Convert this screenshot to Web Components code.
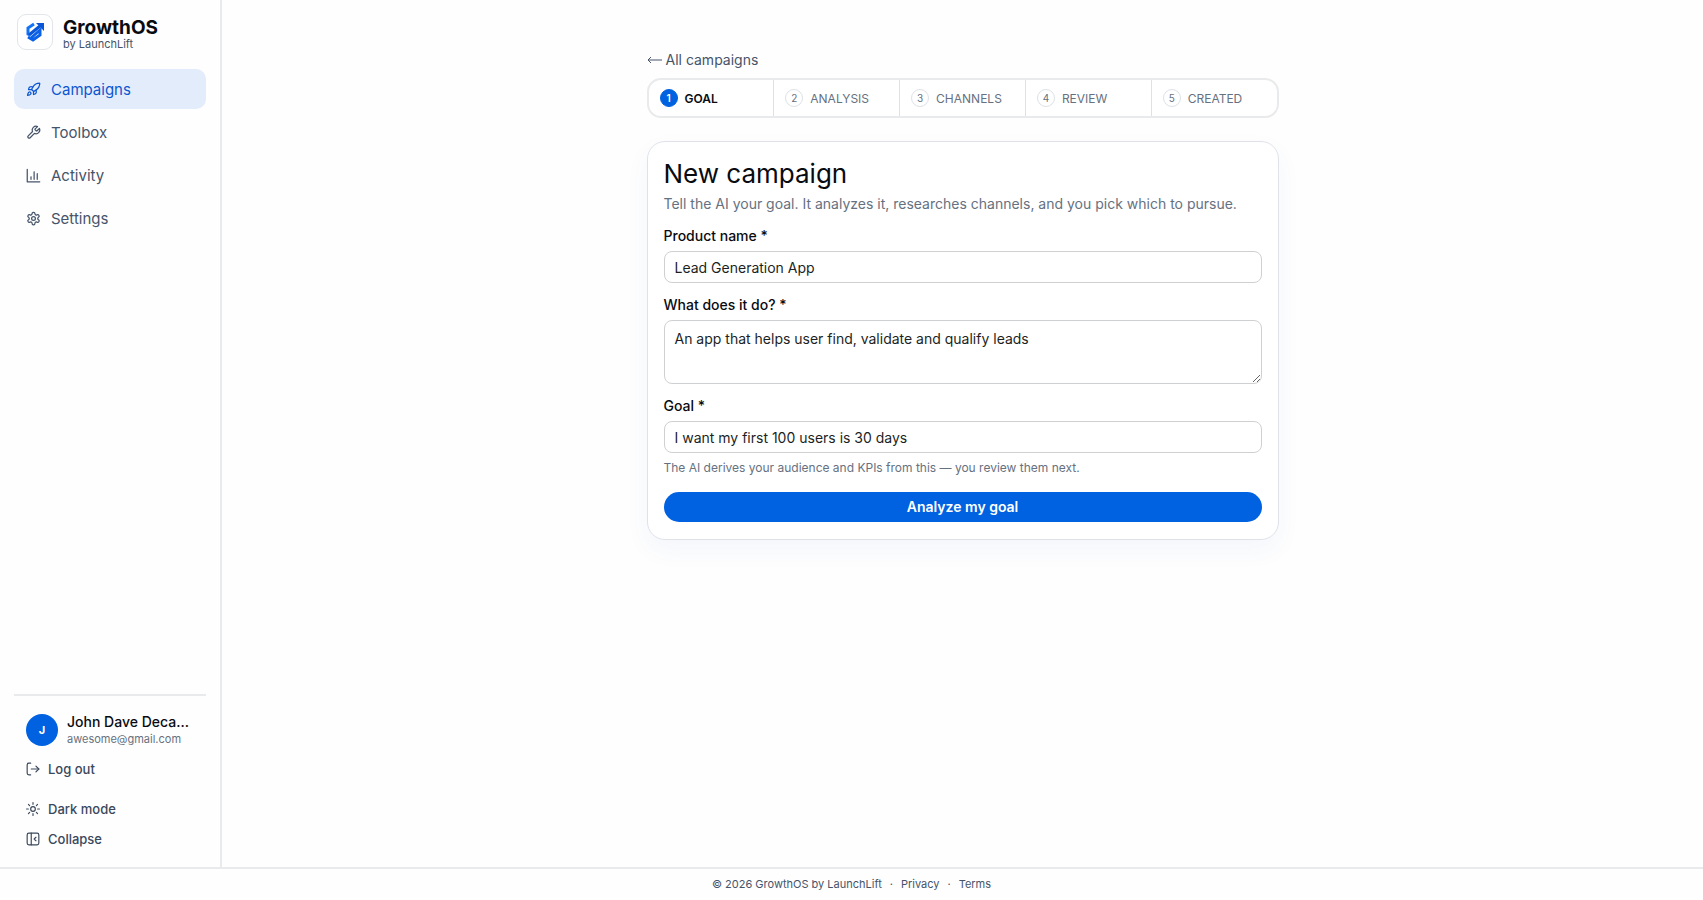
<!DOCTYPE html>
<html lang="en">
<head>
<meta charset="utf-8">
<meta name="viewport" content="width=device-width, initial-scale=1">
<title>New campaign - GrowthOS</title>
<style>
    :root {
        --blue: #0062e0;
        --ink: #090b10;
        --slate: #46546a;
        --muted: #66717f;
        --line: #e9eaec;
        --field: #cfd0d2;
    }

    body {
        margin: 0;
        font-family: Inter, "Noto Sans", sans-serif;
        font-size: 14px;
        color: var(--ink);
        background: #fefefe;
    }
</style>
</head>
<body>
<app-shell>
    <side-bar slot="sidebar">
        <brand-logo slot="brand"></brand-logo>
        <nav-item icon="rocket" href="#campaigns" active>Campaigns</nav-item>
        <nav-item icon="wrench" href="#toolbox">Toolbox</nav-item>
        <nav-item icon="chart" href="#activity">Activity</nav-item>
        <nav-item icon="gear" href="#settings">Settings</nav-item>
        <user-card slot="account" initial="J" email="awesome@gmail.com">John Dave Decastro</user-card>
        <side-action slot="account" icon="logout">Log out</side-action>
        <side-action slot="tools" icon="sun">Dark mode</side-action>
        <side-action slot="tools" icon="panel">Collapse</side-action>
    </side-bar>
    <back-link href="#campaigns">All campaigns</back-link>
    <step-list>
        <step-item number="1" active>Goal</step-item>
        <step-item number="2">Analysis</step-item>
        <step-item number="3">Channels</step-item>
        <step-item number="4">Review</step-item>
        <step-item number="5">Created</step-item>
    </step-list>
    <campaign-form></campaign-form>
    <page-footer slot="footer"></page-footer>
</app-shell>

<script>
const ICONS = {
    rocket: '<path d="M4.5 16.5c-1.5 1.26-2 5-2 5s3.74-.5 5-2c.71-.84.7-2.13-.09-2.91a2.18 2.18 0 0 0-2.91-.09z"/><path d="m12 15-3-3a22 22 0 0 1 2-3.95A12.88 12.88 0 0 1 22 2c0 2.72-.78 7.5-6 11a22.35 22.35 0 0 1-4 2z"/><path d="M9 12H4s.55-3.03 2-4c1.62-1.08 5 0 5 0"/><path d="M12 15v5s3.03-.55 4-2c1.08-1.62 0-5 0-5"/>',
    wrench: '<path d="M14.7 6.3a1 1 0 0 0 0 1.4l1.6 1.6a1 1 0 0 0 1.4 0l3.77-3.77a6 6 0 0 1-7.94 7.94l-6.91 6.91a2.12 2.12 0 0 1-3-3l6.91-6.91a6 6 0 0 1 7.94-7.94l-3.76 3.76z"/>',
    chart: '<path d="M2 2v20h20"/><path d="M8 18v-4"/><path d="M13 18V6"/><path d="M18 18V9"/>',
    gear: '<path d="M12.22 2h-.44a2 2 0 0 0-2 2v.18a2 2 0 0 1-1 1.73l-.43.25a2 2 0 0 1-2 0l-.15-.08a2 2 0 0 0-2.73.73l-.22.38a2 2 0 0 0 .73 2.73l.15.1a2 2 0 0 1 1 1.72v.51a2 2 0 0 1-1 1.74l-.15.09a2 2 0 0 0-.73 2.73l.22.38a2 2 0 0 0 2.73.73l.15-.08a2 2 0 0 1 2 0l.43.25a2 2 0 0 1 1 1.73V20a2 2 0 0 0 2 2h.44a2 2 0 0 0 2-2v-.18a2 2 0 0 1 1-1.73l.43-.25a2 2 0 0 1 2 0l.15.08a2 2 0 0 0 2.73-.73l.22-.39a2 2 0 0 0-.73-2.73l-.15-.08a2 2 0 0 1-1-1.74v-.5a2 2 0 0 1 1-1.74l.15-.09a2 2 0 0 0 .73-2.73l-.22-.38a2 2 0 0 0-2.73-.73l-.15.08a2 2 0 0 1-2 0l-.43-.25a2 2 0 0 1-1-1.73V4a2 2 0 0 0-2-2z"/><circle cx="12" cy="12" r="3"/>',
    logout: '<path d="M8 2H5a3 3 0 0 0-3 3v14a3 3 0 0 0 3 3h3"/><path d="M9 12h13"/><path d="m17 7 5 5-5 5"/>',
    sun: '<circle cx="12" cy="12" r="4"/><path d="M12 1v3M12 20v3M4.2 4.2l2 2M17.8 17.8l2 2M1 12h3M20 12h3M6.2 17.8l-2 2M19.8 4.2l-2 2"/>',
    panel: '<rect x="2" y="2" width="20" height="20" rx="3"/><path d="M9 2v20"/><path d="m17 9-3 3 3 3"/>'
};

function icon(name, size) {
    return `<svg width="${size}" height="${size}" viewBox="0 0 24 24" fill="none" stroke="currentColor" stroke-width="2" stroke-linecap="round" stroke-linejoin="round" aria-hidden="true">${ICONS[name]}</svg>`;
}

class AppShell extends HTMLElement {
    constructor() {
        super();
        this.attachShadow({ mode: 'open' }).innerHTML = `
            <style>
            :host {
                display: flex;
                flex-direction: column;
                min-height: 100vh;
            }

            .body {
                display: flex;
                flex: 1;
            }

            main {
                flex: 1;
                display: flex;
                justify-content: center;
                padding: 48px 24px;
            }

            .column {
                flex: 1;
                max-width: 632px;
            }
            </style>
            <div class="body">
                <slot name="sidebar"></slot>
                <main><div class="column"><slot></slot></div></main>
            </div>
            <slot name="footer"></slot>
        `;
    }
}

class SideBar extends HTMLElement {
    constructor() {
        super();
        this.attachShadow({ mode: 'open' }).innerHTML = `
            <style>
            :host {
                display: flex;
                flex-direction: column;
                box-sizing: border-box;
                width: 222px;
                padding: 14px 14px 13px;
                border-right: 2px solid var(--line);
            }

            nav {
                display: flex;
                flex-direction: column;
                gap: 3px;
                margin-top: 19px;
                flex: 1;
            }

            .account {
                border-top: 2px solid var(--line);
                padding: 17px 12px 0;
            }

            .tools {
                padding: 10px 12px 0;
            }
            </style>
            <slot name="brand"></slot>
            <nav aria-label="Main"><slot></slot></nav>
            <div class="account"><slot name="account"></slot></div>
            <div class="tools"><slot name="tools"></slot></div>
        `;
    }
}

class BrandLogo extends HTMLElement {
    constructor() {
        super();
        this.attachShadow({ mode: 'open' }).innerHTML = `
            <style>
            :host {
                display: flex;
                align-items: center;
                gap: 10px;
                padding-left: 3px;
            }

            .mark {
                display: flex;
                align-items: center;
                justify-content: center;
                box-sizing: border-box;
                width: 36px;
                height: 36px;
                border: 1px solid #e2e5ea;
                border-radius: 9px;
                background: #fff;
            }

            .text {
                padding-top: 3px;
            }

            .name {
                font-size: 19px;
                font-weight: 700;
                line-height: 20px;
            }

            .by {
                font-size: 11px;
                line-height: 12px;
                color: var(--slate);
            }
            </style>
            <div class="mark">
                <svg width="20" height="22" viewBox="0 0 20 22" fill="none" stroke-width="3" aria-hidden="true">
                    <path stroke="#1273f5" d="M9 3 3 7v6l2 1"/>
                    <path stroke="#0a56d8" d="M4 14 15 5"/>
                    <path fill="#0a56d8" d="M11 2h8v8z"/>
                    <path stroke="#0b62e6" d="M3 16l5 3 7-5V9L6 17"/>
                </svg>
            </div>
            <div class="text">
                <div class="name">GrowthOS</div>
                <div class="by">by LaunchLift</div>
            </div>
        `;
    }
}

class NavItem extends HTMLElement {
    constructor() {
        super();
        this.attachShadow({ mode: 'open' }).innerHTML = `
            <style>
            :host {
                display: block;
            }

            a {
                display: flex;
                align-items: center;
                gap: 10px;
                height: 40px;
                padding: 0 12px;
                border-radius: 10px;
                font-size: 15px;
                color: var(--slate);
                text-decoration: none;
            }

            :host([active]) a {
                background: #e3ecfb;
                color: #0b57d0;
            }
            </style>
            <a href="${this.getAttribute('href')}">${icon(this.getAttribute('icon'), 15)}<slot></slot></a>
        `;
    }
}

class UserCard extends HTMLElement {
    constructor() {
        super();
        this.attachShadow({ mode: 'open' }).innerHTML = `
            <style>
            :host {
                display: flex;
                align-items: center;
                gap: 9px;
                margin-bottom: 7px;
            }

            .avatar {
                flex: none;
                width: 32px;
                line-height: 32px;
                border-radius: 50%;
                background: var(--blue);
                color: #fff;
                font-size: 11px;
                font-weight: 700;
                text-align: center;
            }

            .text {
                min-width: 0;
            }

            .name {
                font-size: 14px;
                font-weight: 500;
                line-height: 18px;
                overflow: hidden;
                text-overflow: ellipsis;
                white-space: nowrap;
            }

            .email {
                font-size: 11px;
                line-height: 16px;
                color: var(--muted);
            }
            </style>
            <div class="avatar">${this.getAttribute('initial')}</div>
            <div class="text">
                <div class="name"><slot></slot></div>
                <div class="email">${this.getAttribute('email')}</div>
            </div>
        `;
    }
}

class SideAction extends HTMLElement {
    constructor() {
        super();
        this.attachShadow({ mode: 'open' }).innerHTML = `
            <style>
            :host {
                display: block;
            }

            button {
                display: flex;
                align-items: center;
                gap: 8px;
                width: 100%;
                height: 30px;
                padding: 0;
                border: 0;
                background: none;
                font: 500 13px/16px Inter, "Noto Sans", sans-serif;
                color: #3a485c;
            }
            </style>
            <button type="button">${icon(this.getAttribute('icon'), 14)}<slot></slot></button>
        `;
    }
}

class BackLink extends HTMLElement {
    constructor() {
        super();
        this.attachShadow({ mode: 'open' }).innerHTML = `
            <style>
            :host {
                display: block;
                line-height: 24px;
                margin-bottom: 6px;
            }

            a {
                display: inline-flex;
                align-items: center;
                gap: 4px;
                font-size: 14px;
                color: var(--slate);
                text-decoration: none;
            }
            </style>
            <a href="${this.getAttribute('href')}">
                <svg width="15" height="10" viewBox="0 0 15 10" fill="none" stroke="currentColor" stroke-linejoin="round" aria-hidden="true"><path d="M4 2 1 5l3 3M1 5h14"/></svg>
                <slot></slot>
            </a>
        `;
    }
}

class StepList extends HTMLElement {
    constructor() {
        super();
        this.setAttribute('role', 'list');
        this.attachShadow({ mode: 'open' }).innerHTML = `
            <style>
            :host {
                display: flex;
                border: 2px solid var(--line);
                border-radius: 14px;
                margin-bottom: 23px;
                background: #fff;
            }
            </style>
            <slot></slot>
        `;
    }
}

class StepItem extends HTMLElement {
    constructor() {
        super();
        this.setAttribute('role', 'listitem');
        this.attachShadow({ mode: 'open' }).innerHTML = `
            <style>
            :host {
                flex: 1;
                display: flex;
                align-items: center;
                gap: 7px;
                height: 36px;
                padding-left: 11px;
                border-left: 1px solid #dfe1e4;
                font-size: 12px;
                text-transform: uppercase;
                color: var(--muted);
            }

            :host(:first-child) {
                border-left: 0;
            }

            .number {
                box-sizing: border-box;
                width: 18px;
                line-height: 16px;
                border: 1px solid #dde1e6;
                border-radius: 50%;
                text-align: center;
                font-size: 10px;
            }

            :host([active]) {
                color: var(--ink);
                font-weight: 600;
            }

            :host([active]) .number {
                background: var(--blue);
                border-color: var(--blue);
                color: #fff;
            }
            </style>
            <span class="number">${this.getAttribute('number')}</span>
            <span><slot></slot></span>
        `;
    }
}

class CampaignForm extends HTMLElement {
    constructor() {
        super();
        this.attachShadow({ mode: 'open' }).innerHTML = `
            <style>
            :host {
                display: block;
                padding: 16px 16px 17px;
                border: 1px solid #dfe3e9;
                border-radius: 18px;
                background: #fff;
                box-shadow: 0 10px 24px rgba(30, 90, 190, 0.05);
            }

            h1 {
                margin: 0;
                font-size: 26px;
                font-weight: 400;
                line-height: 32px;
            }

            .lead {
                margin: 0 0 8px;
                font-size: 14px;
                line-height: 28px;
                color: var(--muted);
            }

            label {
                display: block;
                font-size: 14px;
                font-weight: 500;
                line-height: 20px;
                margin-bottom: 5px;
            }

            input,
            textarea {
                display: block;
                box-sizing: border-box;
                width: 100%;
                height: 32px;
                margin: 0 0 12px;
                padding: 0 10px;
                border: 1px solid var(--field);
                border-radius: 8px;
                background: #fff;
                color: #1c1f24;
                font: 14px/20px Inter, "Noto Sans", sans-serif;
            }

            textarea {
                height: 64px;
                padding-top: 8px;
            }

            .hint {
                margin: -9px 0 12px;
                font-size: 12px;
                line-height: 24px;
                color: var(--muted);
            }

            button {
                display: block;
                width: 100%;
                height: 30px;
                padding: 0;
                border: 0;
                border-radius: 15px;
                background: var(--blue);
                color: #fff;
                font: 600 14px/20px Inter, "Noto Sans", sans-serif;
            }
            </style>
            <h1>New campaign</h1>
            <p class="lead">Tell the AI your goal. It analyzes it, researches channels, and you pick which to pursue.</p>
            <form>
                <label for="product">Product name *</label>
                <input id="product" type="text" value="Lead Generation App">
                <label for="about">What does it do? *</label>
                <textarea id="about">An app that helps user find, validate and qualify leads</textarea>
                <label for="goal">Goal *</label>
                <input id="goal" type="text" value="I want my first 100 users is 30 days">
                <p class="hint">The AI derives your audience and KPIs from this — you review them next.</p>
                <button type="button">Analyze my goal</button>
            </form>
        `;
    }
}

class PageFooter extends HTMLElement {
    constructor() {
        super();
        this.attachShadow({ mode: 'open' }).innerHTML = `
            <style>
            footer {
                display: flex;
                justify-content: center;
                gap: 8px;
                padding: 7px 0 8px;
                border-top: 2px solid var(--line);
                font-size: 11px;
                line-height: 16px;
                color: var(--slate);
            }

            a {
                color: inherit;
                text-decoration: none;
            }
            </style>
            <footer>
                <span>© 2026 GrowthOS by LaunchLift</span>
                <span>·</span>
                <a href="#privacy">Privacy</a>
                <span>·</span>
                <a href="#terms">Terms</a>
            </footer>
        `;
    }
}

customElements.define('app-shell', AppShell);
customElements.define('side-bar', SideBar);
customElements.define('brand-logo', BrandLogo);
customElements.define('nav-item', NavItem);
customElements.define('user-card', UserCard);
customElements.define('side-action', SideAction);
customElements.define('back-link', BackLink);
customElements.define('step-list', StepList);
customElements.define('step-item', StepItem);
customElements.define('campaign-form', CampaignForm);
customElements.define('page-footer', PageFooter);
</script>
</body>
</html>
